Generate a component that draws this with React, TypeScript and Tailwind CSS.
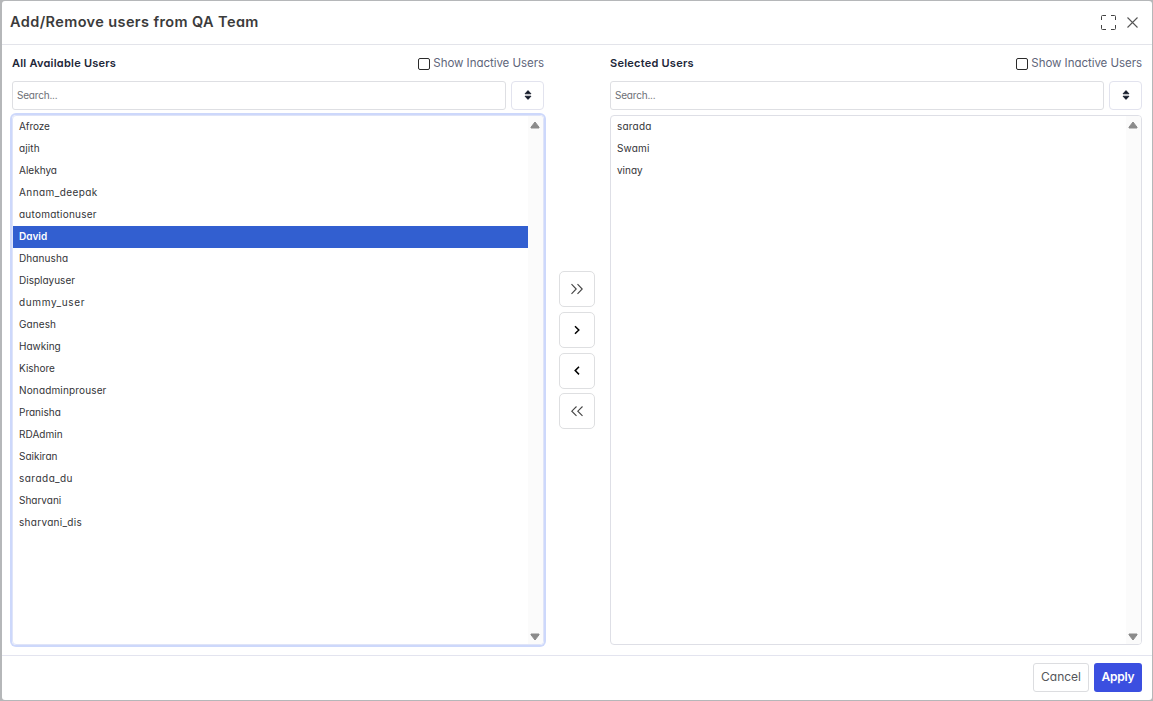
import type { ReactNode } from 'react';

type User = { name: string; tracking?: string };

const available: User[] = [
  { name: 'Afroze', tracking: 'tracking-[-0.1px]' },
  { name: 'ajith', tracking: 'tracking-[0.1px]' },
  { name: 'Alekhya' },
  { name: 'Annam_deepak', tracking: 'tracking-[0.42px]' },
  { name: 'automationuser', tracking: 'tracking-[0.24px]' },
  { name: 'David' },
  { name: 'Dhanusha', tracking: 'tracking-[0.1px]' },
  { name: 'Displayuser' },
  { name: 'dummy_user', tracking: 'tracking-[0.65px]' },
  { name: 'Ganesh', tracking: 'tracking-[0.1px]' },
  { name: 'Hawking' },
  { name: 'Kishore' },
  { name: 'Nonadminprouser', tracking: 'tracking-[0.15px]' },
  { name: 'Pranisha' },
  { name: 'RDAdmin', tracking: 'tracking-[0.05px]' },
  { name: 'Saikiran' },
  { name: 'sarada_du', tracking: 'tracking-[0.48px]' },
  { name: 'Sharvani' },
  { name: 'sharvani_dis', tracking: 'tracking-[0.3px]' },
];

const selected: User[] = [
  { name: 'sarada', tracking: 'tracking-[0.2px]' },
  { name: 'Swami', tracking: 'tracking-[0.15px]' },
  { name: 'vinay' },
];

function SortIcon() {
  return (
    <svg width="8" height="10" viewBox="0 0 8 10" fill="#111827">
      <path d="M4 .6 7 3.800H1Z M4 9.400 1 6.200h6Z" stroke="#111827" strokeWidth=".8" strokeLinejoin="round" />
    </svg>
  );
}

function Scrollbar() {
  return (
    <div className="flex w-[15px] shrink-0 flex-col items-start justify-between rounded-r-[3px] bg-[#fbfbfb] pt-[5px] pb-[3px] pl-0.5">
      <svg width="10" height="8" viewBox="0 0 10 8">
        <path d="M5 1 9 6.2V7H1v-.8Z" fill="#8b8b8b" stroke="#8b8b8b" strokeWidth="1" strokeLinejoin="round" />
      </svg>
      <svg width="10" height="8" viewBox="0 0 10 8">
        <path d="M5 7 9 1.8V1H1v.8Z" fill="#8b8b8b" stroke="#8b8b8b" strokeWidth="1" strokeLinejoin="round" />
      </svg>
    </div>
  );
}

type PanelProps = { title: string; users: User[]; active?: string; focused?: boolean };

function Panel({ title, users, active, focused }: PanelProps) {
  return (
    <section className="flex w-[532px] flex-col">
      <div className="flex h-9 items-center justify-between pt-px">
        <h2 className="text-[11px] font-semibold tracking-[0.24px] text-[#212638]">{title}</h2>
        <label className="flex items-center gap-[3px] text-[11.5px] tracking-[-0.04px] text-[#60667a]">
          <span className="mt-px size-[12px] rounded-[2px] border border-[#2b2b2b] bg-white" />
          Show Inactive Users
        </label>
      </div>
      <div className="flex h-[29px] gap-[5px]">
        <div className="flex flex-1 items-center rounded-[3px] border border-[#dedfe3] px-1 text-[10px] tracking-[-0.2px] text-[#6c6f76]">
          Search...
        </div>
        <button className="flex w-[33px] items-center justify-center rounded-[4px] border border-[#e2e3ee] pb-px">
          <SortIcon />
        </button>
      </div>
      <div
        className={
          focused
            ? 'mt-[5px] flex h-[530px] rounded-[4px] border border-[#dfe4f8] shadow-[0_0_0_2px_#cdd8fb]'
            : 'mt-[5px] flex h-[530px] rounded-[4px] border border-[#dedfe6]'
        }
      >
        <ul className="flex-1 text-[10px]">
          {users.map((u) => (
            <li key={u.name} className={u.tracking}>
              <span
                className={
                  u.name === active
                    ? 'flex h-[22px] items-center bg-[#325fd0] pb-0.5 pl-1.5 font-semibold text-white'
                    : 'flex h-[22px] items-center pb-0.5 pl-1.5 text-[#333438]'
                }
              >
                {u.name}
              </span>
            </li>
          ))}
        </ul>
        <Scrollbar />
      </div>
    </section>
  );
}

function MoveButton({ children }: { children: ReactNode }) {
  return (
    <button className="flex size-9 items-center justify-center rounded-[5px] border border-[#dedfe1]">
      {children}
    </button>
  );
}

export default function App() {
  return (
    <div className="h-[701px] w-[1153px] bg-[#b5b7b9] pt-px pr-px pb-px pl-0.5 font-['Inter','Liberation_Sans',sans-serif] [font-feature-settings:'cv11']">
      <div className="flex h-full flex-col rounded-[3px] bg-white">
        <header className="flex h-11 items-center justify-between border-b border-[#e3e4ea] pr-[13px] pl-2">
          <h1 className="pb-0.5 text-[14.5px] font-semibold tracking-[0.4px] text-[#3b3b3b]">
            Add/Remove users from QA Team
          </h1>
          <div className="flex items-center gap-[10px]">
            <svg width="15" height="15" viewBox="0 0 15 15" fill="none" stroke="#444" strokeWidth="1">
              <path d="M.5 5V1.5a1 1 0 0 1 1-1H5M10 .5h3.5a1 1 0 0 1 1 1V5M14.5 10v3.5a1 1 0 0 1-1 1H10M5 14.5H1.5a1 1 0 0 1-1-1V10" />
            </svg>
            <svg width="13" height="13" viewBox="0 0 13 13" fill="none" stroke="#555" strokeWidth="1.1">
              <path d="M1.5 1.5l10 10M11.5 1.5l-10 10" />
            </svg>
          </div>
        </header>
        <main className="flex flex-1 px-2.5">
          <Panel title="All Available Users" users={available} active="David" focused />
          <div className="flex w-[66px] flex-col items-center gap-[5px] pt-[226px]">
            <MoveButton>
              <svg width="14" height="12" viewBox="0 0 14 12" fill="none" stroke="#444" strokeWidth="1.1">
                <path d="M1.500 1.200 6.200 6l-4.700 4.800M7.500 1.200 12.200 6l-4.700 4.800" />
              </svg>
            </MoveButton>
            <MoveButton>
              <svg width="8" height="10" viewBox="0 0 8 10" fill="none" stroke="#000" strokeWidth="1.5">
                <path d="M2 1.200 5.800 5 2 8.800" />
              </svg>
            </MoveButton>
            <MoveButton>
              <svg width="8" height="10" viewBox="0 0 8 10" fill="none" stroke="#000" strokeWidth="1.5">
                <path d="M6 .8 2.200 4.600 6 8.400" />
              </svg>
            </MoveButton>
            <div className="-mt-px">
              <MoveButton>
                <svg width="14" height="12" viewBox="0 0 14 12" fill="none" stroke="#444" strokeWidth="1.1">
                  <path d="M6.500 1.500 1.800 6.200l4.700 4.700M12.500 1.500 7.800 6.200l4.700 4.700" />
                </svg>
              </MoveButton>
            </div>
          </div>
          <Panel title="Selected Users" users={selected} />
        </main>
        <footer className="flex h-[45px] justify-end gap-[5px] border-t border-[#e3e4ef] pt-[7px] pr-2.5 text-[12px]">
          <button className="h-[29px] w-14 rounded-[3px] border border-[#dcdde0] pb-0.5 text-[#55565a]">Cancel</button>
          <button className="h-[29px] w-12 rounded-[3px] bg-[#3b4fe0] pb-0.5 font-semibold tracking-[-0.25px] text-white">
            Apply
          </button>
        </footer>
      </div>
    </div>
  );
}
